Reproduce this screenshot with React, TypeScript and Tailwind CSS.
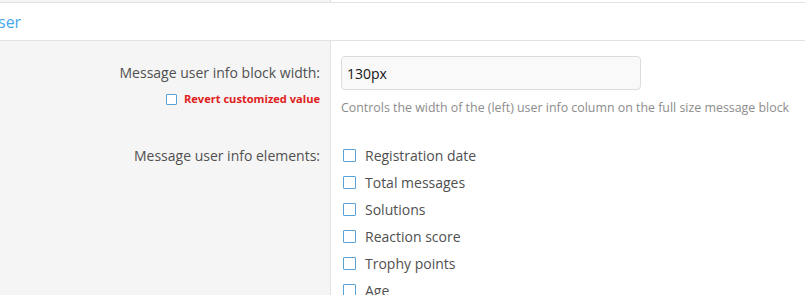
const elements = [
  "Registration date",
  "Total messages",
  "Solutions",
  "Reaction score",
  "Trophy points",
  "Age",
];

function Box({ small = false }: { small?: boolean }) {
  return (
    <span
      className={`block shrink-0 rounded-[1px] border border-[#5aa2d6] bg-white ${
        small ? "size-[11px]" : "size-[13px]"
      }`}
    />
  );
}

export default function App() {
  return (
    <div
      className="h-[295px] w-[805px] overflow-hidden bg-white text-[#505050]"
      style={{ fontFamily: '"Segoe UI", "Open Sans", "Liberation Sans", sans-serif' }}
    >
      <div className="flex h-[3px] border-b border-[#e2e2e2]">
        <div className="w-[331px] border-r border-[#e2e2e2] bg-[#f5f5f5]" />
        <div className="flex-1" />
      </div>
      <div className="flex h-[38px] items-center border-b border-[#e2e2e2]">
        <span className="-ml-[2px] text-[16px] leading-[24px] text-[#47a7eb]">ser</span>
      </div>
      <div className="flex h-[260px]">
        <div className="w-[331px] shrink-0 border-r border-[#e2e2e2] bg-[#f5f5f5] pr-[10px] text-right">
          <div className="pt-[22px] text-[14px] leading-[20px] text-[#505050]">
            Message user info block width:
          </div>
          <div className="mt-[8px] flex items-center justify-end gap-[7px]">
            <Box small />
            <span className="text-[11.1px] font-bold leading-[16px] text-[#e02020]">
              Revert customized value
            </span>
          </div>
          <div className="mt-[39px] text-[14px] leading-[20px]">Message user info elements:</div>
        </div>
        <div className="flex-1 pl-[10px]">
          <div className="mt-[15px] flex h-[34px] w-[300px] items-center rounded-[4px] border border-[#dcdcdc] bg-[#f9f9f9] px-[5px] text-[14px] text-[#141414]">
            130px
          </div>
          <div className="mt-[9px] text-[12.4px] leading-[18px] text-[#8c8c8c]">
            Controls the width of the (left) user info column on the full size message block
          </div>
          <div className="mt-[25px] flex flex-col">
            {elements.map((e) => (
              <div key={e} className="flex h-[27px] items-center gap-[9px] pl-[2px] text-[14px] text-[#505050]">
                <Box />
                <span>{e}</span>
              </div>
            ))}
          </div>
        </div>
      </div>
    </div>
  );
}
